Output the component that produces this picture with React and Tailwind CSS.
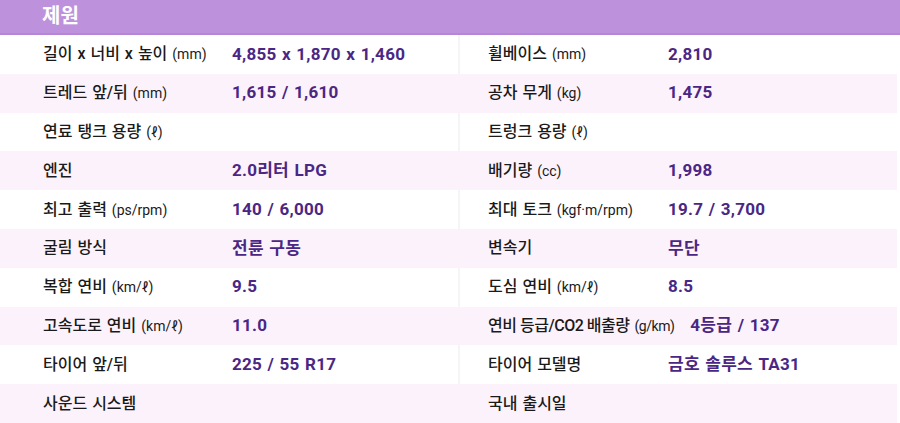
const rows = [
  [
    { label: "길이 x 너비 x 높이", unit: "(mm)", value: "4,855 x 1,870 x 1,460" },
    { label: "휠베이스", unit: "(mm)", value: "2,810" },
  ],
  [
    { label: "트레드 앞/뒤", unit: "(mm)", value: "1,615 / 1,610" },
    { label: "공차 무게", unit: "(kg)", value: "1,475" },
  ],
  [
    { label: "연료 탱크 용량", unit: "(ℓ)", value: "" },
    { label: "트렁크 용량", unit: "(ℓ)", value: "" },
  ],
  [
    { label: "엔진", value: "2.0리터 LPG" },
    { label: "배기량", unit: "(cc)", value: "1,998" },
  ],
  [
    { label: "최고 출력", unit: "(ps/rpm)", value: "140 / 6,000" },
    { label: "최대 토크", unit: "(kgf·m/rpm)", value: "19.7 / 3,700" },
  ],
  [
    { label: "굴림 방식", value: "전륜 구동" },
    { label: "변속기", value: "무단" },
  ],
  [
    { label: "복합 연비", unit: "(km/ℓ)", value: "9.5" },
    { label: "도심 연비", unit: "(km/ℓ)", value: "8.5" },
  ],
  [
    { label: "고속도로 연비", unit: "(km/ℓ)", value: "11.0" },
    { label: "연비 등급/CO2 배출량", unit: "(g/km)", value: "4등급 / 137", tight: true },
  ],
  [
    { label: "타이어 앞/뒤", value: "225 / 55 R17" },
    { label: "타이어 모델명", value: "금호 솔루스 TA31" },
  ],
  [
    { label: "사운드 시스템", value: "" },
    { label: "국내 출시일", value: "" },
  ],
];

const Cell = ({ item, labelWidth }) => (
  <div className="flex items-center gap-4 h-full">
    <div
      className={`${labelWidth} shrink-0 text-[16px] font-medium text-[#1a1a1a] whitespace-nowrap ${
        item.tight ? "tracking-[-0.03em]" : "[word-spacing:1px]"
      }`}
    >
      {item.label}
      {item.unit && <span className="ml-[5px] text-[14px] font-normal">{item.unit}</span>}
    </div>
    <div className="text-[17px] font-bold tracking-[0.015em] [word-spacing:1px] text-[#4a2784] whitespace-nowrap">
      {item.value}
    </div>
  </div>
);

export default function App() {
  return (
    <div
      className="w-[900px] h-[423px] overflow-hidden bg-white"
      style={{ fontFamily: 'Roboto, "Noto Sans CJK KR", sans-serif' }}
    >
      {/* 헤더 */}
      <div className="h-[35px] bg-[#be91dc] border-b-2 border-[#b586d7] flex items-center pl-[42px] pb-[2px]">
        <h2 className="text-[20px] font-bold text-white leading-none">제원</h2>
      </div>

      <div className="pr-[3px]">
        {rows.map((row, i) => (
          <div key={i} className={`flex h-[38.8px] ${i % 2 === 1 ? "bg-[#fcf2fb]" : "bg-white"}`}>
            <div className="w-[458px] pl-[43px]">
              <Cell item={row[0]} labelWidth="min-w-[173px]" />
            </div>
            <div className={`flex-1 pl-[28px] border-l-2 ${i % 2 === 1 ? "border-transparent" : "border-[#f6f4f6]"}`}>
              <Cell item={row[1]} labelWidth="min-w-[164px]" />
            </div>
          </div>
        ))}
      </div>
    </div>
  );
}
